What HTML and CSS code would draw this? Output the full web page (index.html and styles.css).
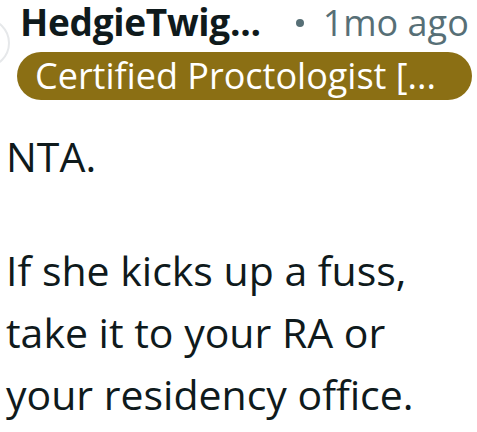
FILE: index.html
```html
<!DOCTYPE html>
<html>
<head>
<meta charset="utf-8">
<link rel="stylesheet" href="styles.css">
</head>
<body>
<div class="comment">
  <div class="avatar"></div>
  <div class="head">
    <div class="meta">
      <span class="user">HedgieTwig...</span>
      <span class="dot"></span>
      <span class="time">1mo ago</span>
    </div>
    <div class="flair">Certified Proctologist [...</div>
  </div>
  <div class="body">
    <p class="first">NTA.</p>
    <p>If she kicks up a fuss, take it to your RA or your residency office.</p>
  </div>
</div>
</body>
</html>
```
FILE: styles.css
```css
html, body {
  margin: 0;
  padding: 0;
  background: #fff;
}
body {
  font-family: "Open Sans", "Noto Sans", sans-serif;
  width: 477px;
  height: 432px;
  overflow: hidden;
}
.comment {
  position: relative;
}
.avatar {
  position: absolute;
  left: -40px;
  top: 18px;
  width: 46px;
  height: 46px;
  border-radius: 50%;
  border: 2px solid #e6e8ea;
}
.head {
  padding-left: 17px;
}
.meta {
  display: flex;
  align-items: baseline;
  padding-left: 3px;
  height: 48px;
  line-height: 44px;
}
.user {
  font-weight: 700;
  font-size: 37px;
  color: #0f1a1c;
  letter-spacing: -0.3px;
}
.dot {
  align-self: flex-start;
  width: 8px;
  height: 8px;
  border-radius: 50%;
  background: #576f76;
  margin: 19px 19px 0 35px;
}
.time {
  font-size: 36px;
  color: #576f76;
}
.flair {
  display: inline-block;
  background: #8b6f14;
  color: #fff;
  font-size: 36px;
  line-height: 48px;
  height: 48px;
  padding: 0 36px 0 18px;
  border-radius: 24px;
  margin-top: 4px;
}
.body {
  padding-left: 6px;
  color: #0f1a1c;
  font-size: 41px;
  line-height: 62px;
}
.body p {
  margin: 52px 0 0 0;
}
.body p.first {
  margin-top: 25px;
}
```
